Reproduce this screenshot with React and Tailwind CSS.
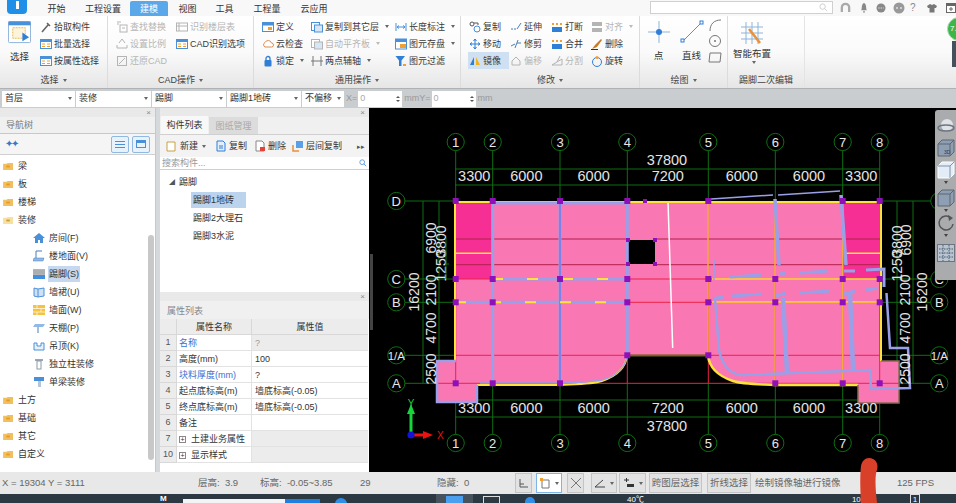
import React from 'react';

const BLUE = '#4a90d9';
const ORANGE = '#f0a030';
const GRAY = '#b4b4b4';

// small ribbon glyphs, all on a 12x12 box
function Glyph({ name, off }) {
  const c = off ? GRAY : BLUE;
  const shapes = {
    dropper: <path d="M2 11 L8 4 M7 2 L10 5" stroke="#666" strokeWidth="1.6" fill="none" />,
    list: <g><rect x="0.5" y="1.5" width="11" height="9" fill="#fff" stroke={c} /><rect x="0.5" y="1.5" width="11" height="2.5" fill={c} /><path d="M2 6 H5 M7 6 H10 M2 8.5 H5 M7 8.5 H10" stroke={ORANGE} /></g>,
    find: <g><rect x="4" y="4" width="7" height="7" fill="none" stroke={c} /><path d="M1 1 H5 M1 3 H3 M6 7 H9" stroke={c} /></g>,
    scale: <path d="M1 10 H11 M1 10 V7 M11 10 V7 M3 5 L6 1 L9 5" stroke={c} fill="none" />,
    restore: <g><rect x="1.5" y="1.5" width="9" height="9" fill="none" stroke={c} /><path d="M3 9 L9 3" stroke={c} /></g>,
    table: <g><rect x="0.5" y="2" width="11" height="8" fill="none" stroke={c} /><path d="M3 2 V10 M0.5 5 H11.5" stroke={c} /></g>,
    define: <g><rect x="0.5" y="1.5" width="11" height="9" fill="#fff" stroke={c} /><rect x="0.5" y="1.5" width="11" height="3" fill={c} /><rect x="6" y="6" width="4" height="3" fill={ORANGE} /></g>,
    cloud: <path d="M3 9 A2.5 2.5 0 0 1 3 4.5 A3.5 3.5 0 0 1 9.5 5 A2 2 0 0 1 9.5 9 Z" fill="#fff" stroke="#e08a50" />,
    lock: <g><rect x="2.5" y="5" width="7" height="6.5" rx="1" fill="#2f7ed8" /><path d="M4 5 V3.5 A2 2 0 0 1 8 3.5 V5" stroke="#2f7ed8" fill="none" strokeWidth="1.3" /></g>,
    copyLayer: <g><rect x="0.5" y="1.5" width="8" height="8" fill="#fff" stroke={c} /><rect x="3.5" y="4" width="8" height="7" fill="#d7e6f7" stroke={c} /></g>,
    axis: <path d="M2 1 V11 M10 1 V11 M0 6 H12" stroke="#777" fill="none" />,
    measure: <path d="M1 2 V10 M11 2 V10 M2 6 H10 M2 6 L4 4.5 M2 6 L4 7.5 M10 6 L8 4.5 M10 6 L8 7.5" stroke={c} fill="none" />,
    save: <g><rect x="0.5" y="1" width="11" height="10" fill="#fff" stroke={c} /><rect x="0.5" y="1" width="11" height="3" fill={c} /><rect x="5" y="6" width="6" height="4" fill={ORANGE} /></g>,
    filter: <g><path d="M0.5 1 H10 L6.5 5.5 V11 H4 V5.5 Z" fill="#2f7ed8" /><rect x="8" y="9" width="3" height="2" fill={ORANGE} /></g>,
    copy: <g><circle cx="3" cy="3" r="2" fill="none" stroke="#555" /><circle cx="8" cy="8" r="3" fill="none" stroke={BLUE} /><path d="M5 2 H9 V4" stroke="#555" fill="none" /></g>,
    move: <path d="M6 1 V11 M1 6 H11 M6 1 L4.5 3 M6 1 L7.5 3 M6 11 L4.5 9 M6 11 L7.5 9 M1 6 L3 4.5 M1 6 L3 7.5 M11 6 L9 4.5 M11 6 L9 7.5" stroke="#2f7ed8" fill="none" />,
    mirror: <g><path d="M5 2 V10 H1 Z" fill="#2f7ed8" /><path d="M7 2 V10 H11 Z" fill="#f2b21c" /></g>,
    extend: <path d="M1 8 H3 M4 8 H6 M7 8 L11 2" stroke="#4a7fb5" fill="none" />,
    trim: <path d="M1 8 L5 6 M7 5 H11 M5 10 L8 2" stroke="#4a7fb5" fill="none" />,
    offset: <path d="M2 10 H10 V6 L6 2 L2 6 Z" fill="none" stroke={c} />,
    split: <g><path d="M1 10 H11 V4 L1 10" fill="none" stroke={c} /><path d="M9 1 L6 7" stroke={c} /></g>,
    breakup: <g><rect x="1" y="6" width="10" height="5" fill="#2f7ed8" /><path d="M2 2 V4 M6 2 V4 M10 2 V4" stroke={ORANGE} strokeWidth="2" /></g>,
    align: <g><rect x="1" y="1" width="10" height="4" fill={c} /><rect x="1" y="7" width="10" height="4" fill={c} /></g>,
    erase: <g><path d="M1 11 L4 7 L10 1 L11 2 L6 9 Z" fill="#c77d2a" /><path d="M0 11.5 H7" stroke="#333" /></g>,
    rotate: <g><circle cx="6" cy="7" r="4.5" fill="none" stroke="#2f7ed8" /><circle cx="6" cy="2.5" r="1.6" fill={ORANGE} /></g>,
  };
  return <svg viewBox="0 0 12 12" className="w-3 h-3 shrink-0">{shapes[name]}</svg>;
}

function Caret({ light }) {
  return <span className={`ml-1 inline-block w-0 h-0 border-x-[2.5px] border-x-transparent border-t-[3px] ${light ? 'border-t-[#bbb]' : 'border-t-[#666]'}`}></span>;
}

function RibbonItem({ icon, label, off, caret, active }) {
  return (
    <div className={`flex items-center gap-[2px] h-[17px] px-[1px] whitespace-nowrap ${off ? 'text-[#b5b5b5]' : 'text-[#3a3a3a]'} ${active ? 'bg-[#cfe0f2]' : ''}`}>
      <Glyph name={icon} off={off} />
      <span className="pt-[2px]">{label}</span>
      {caret && <Caret light={off} />}
    </div>
  );
}

function Column({ width, items }) {
  return (
    <div className="flex flex-col" style={{ width }}>
      {items.map(it => <RibbonItem key={it.label} {...it} />)}
    </div>
  );
}

function Group({ width, title, caret, children, pad = 'pl-[7px]' }) {
  return (
    <div className="flex flex-col h-full border-r border-[#dcdcdc] shrink-0" style={{ width }}>
      <div className={`flex-1 flex pt-[2px] ${pad}`}>{children}</div>
      <div className="h-[17px] flex items-center justify-center text-[#444] pt-[2px]">
        {title}{caret && <Caret />}
      </div>
    </div>
  );
}

function Ribbon() {
  return (
    <div className="h-[72px] flex bg-gradient-to-b from-white via-[#fafafa] to-[#e6e6e6] text-[9px]">
      <Group width={108} title="选择" caret pad="pl-0">
        <div className="w-[39px] flex flex-col items-center pt-[3px] text-[#333]">
          <svg viewBox="0 0 24 24" className="w-[23px] h-[23px]">
            <rect x="0.5" y="0.5" width="23" height="22" rx="1" fill="#fff" stroke="#8fb3d9" />
            <rect x="0.5" y="0.5" width="23" height="4" fill="#4a90d9" />
            <path d="M5 7 H18 V18 H5 Z" fill="#fdf4dc" stroke="#e6b64c" strokeDasharray="2 1" />
            <path d="M15 12 L22 17 L15 21 Z" fill="#2f7ed8" />
          </svg>
          <span className="mt-[6px] text-[9.5px]">选择</span>
        </div>
        <Column width={68} items={[
          { icon: 'dropper', label: '拾取构件' },
          { icon: 'list', label: '批量选择' },
          { icon: 'list', label: '按属性选择' },
        ]} />
      </Group>
      <Group width={146} title="CAD操作" caret>
        <Column width={60} items={[
          { icon: 'find', label: '查找替换', off: true },
          { icon: 'scale', label: '设置比例', off: true },
          { icon: 'restore', label: '还原CAD', off: true },
        ]} />
        <Column width={76} items={[
          { icon: 'table', label: '识别楼层表', off: true },
          { icon: 'list', label: 'CAD识别选项' },
        ]} />
      </Group>
      <Group width={207} title="通用操作" caret>
        <Column width={49} items={[
          { icon: 'define', label: '定义' },
          { icon: 'cloud', label: '云检查' },
          { icon: 'lock', label: '锁定', caret: true },
        ]} />
        <Column width={84} items={[
          { icon: 'copyLayer', label: '复制到其它层', caret: true },
          { icon: 'copyLayer', label: '自动平齐板', off: true, caret: true },
          { icon: 'axis', label: '两点辅轴', caret: true },
        ]} />
        <Column width={66} items={[
          { icon: 'measure', label: '长度标注', caret: true },
          { icon: 'save', label: '图元存盘', caret: true },
          { icon: 'filter', label: '图元过滤' },
        ]} />
      </Group>
      <Group width={179} title="修改" caret>
        <Column width={41} items={[
          { icon: 'copy', label: '复制' },
          { icon: 'move', label: '移动' },
          { icon: 'mirror', label: '镜像', active: true },
        ]} />
        <Column width={41} items={[
          { icon: 'extend', label: '延伸' },
          { icon: 'trim', label: '修剪' },
          { icon: 'offset', label: '偏移', off: true },
        ]} />
        <Column width={40} items={[
          { icon: 'breakup', label: '打断' },
          { icon: 'breakup', label: '合并' },
          { icon: 'split', label: '分割', off: true },
        ]} />
        <Column width={46} items={[
          { icon: 'align', label: '对齐', off: true, caret: true },
          { icon: 'erase', label: '删除' },
          { icon: 'rotate', label: '旋转' },
        ]} />
      </Group>
      <Group width={88} title="绘图" caret pad="pl-[2px]">
        <div className="w-[33px] flex flex-col items-center pt-[2px] text-[#333]">
          <svg viewBox="0 0 24 24" className="w-[24px] h-[24px]">
            <path d="M12 1 V23 M1 12 H23" stroke="#8fb3d9" />
            <circle cx="12" cy="12" r="3" fill="#2f7ed8" />
          </svg>
          <span className="mt-[5px] text-[9.5px]">点</span>
        </div>
        <div className="w-[33px] flex flex-col items-center pt-[2px] text-[#333]">
          <svg viewBox="0 0 24 24" className="w-[24px] h-[24px]">
            <path d="M3 21 L21 3" stroke="#5f8fc4" />
            <rect x="1" y="19" width="3" height="3" fill="#fff" stroke="#2f7ed8" />
            <rect x="20" y="1" width="3" height="3" fill="#fff" stroke="#2f7ed8" />
          </svg>
          <span className="mt-[5px] text-[9.5px]">直线</span>
        </div>
        <div className="flex flex-col items-center gap-[2px]">
          <svg viewBox="0 0 14 14" className="w-[14px] h-[14px]"><path d="M2 13 C2 6 6 2 13 2" stroke="#777" fill="none" /></svg>
          <svg viewBox="0 0 14 14" className="w-[14px] h-[14px]"><circle cx="7" cy="7" r="5.5" stroke="#777" fill="none" /><circle cx="7" cy="7" r="1" fill="#777" /></svg>
          <svg viewBox="0 0 14 14" className="w-[14px] h-[14px]"><path d="M2 3 H13 L12 12 H1 Z" stroke="#777" fill="none" /></svg>
        </div>
      </Group>
      <div className="w-[77px] flex flex-col h-full border-r border-[#e4e4e4]">
        <div className="flex-1 w-[48px] flex flex-col items-center pt-[5px] text-[#333]">
          <svg viewBox="0 0 24 24" className="w-[24px] h-[24px]">
            <path d="M1 6 H23 M1 12 H23 M1 18 H23 M6 1 V23 M12 1 V23 M18 1 V23" stroke="#8fb3d9" />
            <path d="M9 8 L20 22" stroke="#e8913a" strokeWidth="2.5" />
          </svg>
          <span className="mt-[2px] text-[9.5px] whitespace-nowrap">智能布置</span>
          <Caret />
        </div>
        <div className="h-[17px] flex items-center justify-center text-[#444] pt-[2px]">踢脚二次编辑</div>
      </div>
    </div>
  );
}

function TopBar() {
  const tabs = [
    ['开始', 'ml-[20px] w-[19px]'],
    ['工程设置', 'ml-[19px] w-[36px]'],
    ['建模', 'ml-[9px] w-[38px] bg-[#5aa7ea] text-white rounded-t-[2px]'],
    ['视图', 'ml-[10px] w-[19px]'],
    ['工具', 'ml-[18px] w-[19px]'],
    ['工程量', 'ml-[19px] w-[28px]'],
    ['云应用', 'ml-[19px] w-[28px]'],
  ];
  return (
    <div className="h-4 flex items-end bg-[#f8f8f8] text-[9px] text-[#333] relative">
      <div className="w-[20px] h-[14px] ml-[7px] mb-[2px] bg-[#1f8fe8] rounded-b-[4px] shrink-0 flex justify-center">
        <span className="w-[3px] h-[8px] bg-white mt-[1px]"></span>
      </div>
      {tabs.map(([t, cls]) => (
        <div key={t} className={`h-[15px] pt-[2px] flex items-center justify-center whitespace-nowrap shrink-0 ${cls}`}>{t}</div>
      ))}
      <div className="ml-auto flex items-center self-start mt-[1px]">
        <div className="w-[183px] h-[13px] bg-white border border-[#d0d0d0] flex items-center justify-end pr-1">
          <svg viewBox="0 0 10 10" className="w-[9px] h-[9px]"><circle cx="4" cy="4" r="3" fill="none" stroke="#ccc" /><path d="M6 6 L9 9" stroke="#ccc" /></svg>
        </div>
        <svg viewBox="0 0 12 12" className="w-[11px] h-[11px] ml-[7px]"><path d="M2 11 V6 A4 4 0 0 1 10 6 V11" fill="none" stroke="#aaa" strokeWidth="2.5" /></svg>
        <svg viewBox="0 0 8 12" className="w-[8px] h-[11px] ml-[9px]"><path d="M1 9 C2 7 1 2 4 1 C7 2 6 7 7 9 Z M3 10 H5 V11.5 H3 Z" fill="#888" /></svg>
        <svg viewBox="0 0 10 10" className="w-[10px] h-[10px] ml-[8px]"><circle cx="5" cy="5" r="4.5" fill="#888" /><path d="M2.5 5 H7.5" stroke="#fff" strokeDasharray="1 1.2" /></svg>
        <svg viewBox="0 0 12 12" className="w-[12px] h-[12px] ml-[7px]"><circle cx="6" cy="6" r="5.5" fill="#999" /><path d="M3 6 H5 M7 6 H9" stroke="#fff" /></svg>
        <span className="w-[8px] ml-[5px] text-[#888] text-[10px] leading-none">?</span>
        <svg viewBox="0 0 10 10" className="w-[10px] h-[10px] ml-[9px]"><path d="M3 1 L0 3 L1 5 H2.5 V9.5 H7.5 V5 H9 L10 3 L7 1 L5 2 Z" fill="#777" /></svg>
        <svg viewBox="0 0 10 10" className="w-[10px] h-[10px] ml-[9px]"><rect x="0.5" y="0.5" width="9" height="9" fill="#fff" stroke="#666" /><rect x="0.5" y="0.5" width="9" height="2.5" fill="#666" /><path d="M5 4 V8 M3 6 H7" stroke="#666" /></svg>
      </div>
    </div>
  );
}

function SelectBox({ width, label }) {
  return (
    <div className="h-[16px] bg-white flex items-center justify-between px-[3px] shrink-0 text-[#333]" style={{ width }}>
      <span className="whitespace-nowrap overflow-hidden pt-[1px]">{label}</span>
      <span className="w-0 h-0 border-x-[2px] border-x-transparent border-t-[3px] border-t-[#666] shrink-0"></span>
    </div>
  );
}

function Spin() {
  return (
    <div className="w-[44px] h-[16px] bg-white flex items-center justify-between px-[2px] text-[#aaa] shrink-0">
      <span>0</span>
      <span className="flex flex-col gap-[2px]">
        <span className="w-0 h-0 border-x-[2px] border-x-transparent border-b-[2px] border-b-[#555]"></span>
        <span className="w-0 h-0 border-x-[2px] border-x-transparent border-t-[2px] border-t-[#555]"></span>
      </span>
    </div>
  );
}

function OptionBar() {
  return (
    <div className="h-5 bg-[#c9cdd0] flex items-center pl-[2px] gap-[1px] text-[9px] border-t border-[#aeb2b5]">
      <SelectBox width={73} label="首层" />
      <SelectBox width={75} label="装修" />
      <SelectBox width={74} label="踢脚" />
      <SelectBox width={74} label="踢脚1地砖" />
      <SelectBox width={42} label="不偏移" />
      <span className="text-[#999] ml-[1px] whitespace-nowrap">X=</span>
      <Spin />
      <span className="text-[#999] whitespace-nowrap ml-[1px]">mmY=</span>
      <Spin />
      <span className="text-[#999] ml-[1px]">mm</span>
    </div>
  );
}

function Folder({ open }) {
  return (
    <svg viewBox="0 0 12 10" className="w-[11px] h-[9px] shrink-0">
      <path d="M0 2 H4 L5 1 H11 V9 H0 Z" fill={open ? '#f7e0a0' : '#f0c060'} />
      <rect x="3.5" y="4" width="4" height="2" fill={open ? '#c9a040' : '#e89a20'} />
    </svg>
  );
}

function TreeIcon({ name }) {
  const shapes = {
    room: <path d="M6 1 L12 6 H10 V11 H7 V8 H5 V11 H2 V6 H0 Z" fill="#4a90d9" />,
    floor: <g><path d="M3 1 V8 M3 1 H9" stroke="#4a7fb5" fill="none" /><path d="M1 8 H11 L10 11 H0 Z" fill="#8fb9e8" stroke="#4a7fb5" strokeWidth="0.5" /></g>,
    skirt: <g><rect x="0" y="1" width="12" height="6" fill="#b5b5b5" /><path d="M0 3 H12 M0 5 H12" stroke="#8a9aaa" strokeWidth="0.5" /><rect x="0" y="7" width="12" height="4" fill="#3f8ee0" /></g>,
    dado: <path d="M1 2 L5 3 L11 2 V10 L5 11 L1 10 Z M5 3 V11" fill="#cfe0f5" stroke="#4a90d9" />,
    wall: <g><rect x="0" y="1" width="12" height="10" fill="#f5c242" /><path d="M0 4.5 H12 M0 8 H12 M4 1 V4.5 M8 4.5 V8 M4 8 V11" stroke="#fff" strokeWidth="0.7" /></g>,
    ceiling: <g><path d="M2 2 H12 L10 5 H0 Z" fill="#8fb9e8" /><path d="M5 5 V11" stroke="#4a7fb5" /></g>,
    hang: <path d="M1 3 H4 V6 H8 V3 H11 V10 H1 Z" fill="#e8f0fa" stroke="#4a90d9" />,
    column: <g><rect x="2" y="1" width="8" height="2" fill="#9aa7b5" /><rect x="4" y="3" width="4" height="8" fill="#fff" stroke="#8a9aaa" /></g>,
    beam: <g><rect x="1" y="1" width="10" height="4" fill="#4a90d9" /><rect x="5" y="5" width="3" height="6" fill="#b5c6d9" /></g>,
  };
  return <svg viewBox="0 0 12 12" className="w-3 h-3 shrink-0">{shapes[name]}</svg>;
}

function NavTree() {
  const rows = [
    { t: '梁' }, { t: '板' }, { t: '楼梯' }, { t: '装修', open: true },
    { t: '房间(F)', i: 'room' }, { t: '楼地面(V)', i: 'floor' }, { t: '踢脚(S)', i: 'skirt', on: true },
    { t: '墙裙(U)', i: 'dado' }, { t: '墙面(W)', i: 'wall' }, { t: '天棚(P)', i: 'ceiling' },
    { t: '吊顶(K)', i: 'hang' }, { t: '独立柱装修', i: 'column' }, { t: '单梁装修', i: 'beam' },
    { t: '土方' }, { t: '基础' }, { t: '其它' }, { t: '自定义' },
  ];
  return (
    <div className="w-[156px] shrink-0 bg-white flex flex-col border-r border-[#c8c8c8] relative text-[9px] text-[#333]">
      <div className="h-[9px] bg-[#e9e9e9] flex justify-end items-center pr-[4px] text-[8px] leading-none text-[#888]">×</div>
      <div className="h-[17px] bg-[#f0f0f0] border-b border-[#c8c8c8] flex items-center pl-[6px] pt-[2px] text-[#777]">导航树</div>
      <div className="h-[21px] bg-[#f5f5f5] border-b border-[#d0d0d0] flex items-center justify-between px-[5px]">
        <span className="text-[#3b78c2] text-[10px] leading-none tracking-[-2px]">✦✦</span>
        <span className="flex gap-[3px]">
          <span className="w-[18px] h-[17px] border border-[#8fb9e0] bg-[#e8f2fb] rounded-[2px] flex flex-col justify-center gap-[2px] px-[3px]">
            <i className="block h-px bg-[#4a90d9]"></i><i className="block h-px bg-[#4a90d9]"></i><i className="block h-px bg-[#4a90d9]"></i>
          </span>
          <span className="w-[18px] h-[17px] border border-[#8fb9e0] bg-[#e8f2fb] rounded-[2px] p-[3px]">
            <i className="block h-[3px] bg-[#4a90d9]"></i>
            <i className="block h-[5px] border border-t-0 border-[#4a90d9]"></i>
          </span>
        </span>
      </div>
      <div className="pt-[2px] flex flex-col">
        {rows.map(r => r.i ? (
          <div key={r.t} className="h-[18px] flex items-center pl-[33px]">
            <TreeIcon name={r.i} />
            <span className={`ml-[3px] whitespace-nowrap leading-[15px] pt-[1px] px-[1px] ${r.on ? 'bg-[#c5d8f0]' : ''}`}>{r.t}</span>
          </div>
        ) : (
          <div key={r.t} className="h-[18px] flex items-center pl-[3px] gap-[4px]">
            <Folder open={r.open} />
            <span className="pt-[2px]">{r.t}</span>
          </div>
        ))}
      </div>
      <div className="absolute left-[148px] top-[127px] w-[6px] h-[225px] bg-[#c8c8c8] rounded-full"></div>
    </div>
  );
}

function ComponentList() {
  return (
    <div className="h-[184px] bg-white flex flex-col text-[9px] text-[#333]">
      <div className="h-[9px] bg-[#e9e9e9] flex justify-end items-center pr-[4px] text-[8px] leading-none text-[#888]">×</div>
      <div className="h-[18px] bg-[#f0f0f0] flex items-end pl-[1px] border-b border-[#d0d0d0]">
        <div className="w-[47px] h-[18px] pt-[2px] bg-[#f8f8f8] flex items-center justify-center">构件列表</div>
        <div className="w-[49px] h-[17px] pt-[2px] ml-[1px] bg-[#dcdcdc] flex items-center justify-center text-[#aaa]">图纸管理</div>
      </div>
      <div className="h-[22px] bg-[#f3f3f3] flex items-center pl-[5px] pr-[4px] whitespace-nowrap">
        <svg viewBox="0 0 12 12" className="w-3 h-3 shrink-0"><path d="M2 2 H10 V11 H2 Z" fill="#fff" stroke="#c9a040" /></svg>
        <span className="ml-[3px] pt-[2px]">新建</span><Caret />
        <svg viewBox="0 0 12 12" className="w-3 h-3 shrink-0 ml-[9px]"><path d="M2 1 H8 L10 3 V11 H2 Z" fill="#e4eefa" stroke="#2f7ed8" /><path d="M4 6 H8 M4 8 H8" stroke="#2f7ed8" /></svg>
        <span className="ml-[2px] pt-[2px]">复制</span>
        <svg viewBox="0 0 12 12" className="w-3 h-3 shrink-0 ml-[7px]"><path d="M2 1 H8 L10 3 V11 H2 Z" fill="#fff" stroke="#888" /><rect x="6" y="7" width="5" height="4" fill="#e0443a" /></svg>
        <span className="ml-[2px] pt-[2px]">删除</span>
        <svg viewBox="0 0 12 12" className="w-3 h-3 shrink-0 ml-[6px]"><rect x="4" y="1" width="7" height="7" fill="#5aa0e8" /><path d="M1 5 V11 H7" stroke="#e8913a" fill="none" strokeWidth="1.5" /></svg>
        <span className="ml-[2px] pt-[2px]">层间复制</span>
        <span className="ml-auto text-[#555] text-[7px] leading-none">▸▸</span>
      </div>
      <div className="h-[13px] flex items-center justify-between px-[2px] border-b border-[#cfcfcf] text-[#999]">
        <span className="pt-[2px]">搜索构件...</span>
        <svg viewBox="0 0 10 10" className="w-[8px] h-[8px]"><circle cx="4" cy="4" r="3" fill="none" stroke="#4a90d9" /><path d="M6 6 L9 9" stroke="#4a90d9" /></svg>
      </div>
      <div className="pt-[3px] flex flex-col">
        <div className="h-[18px] flex items-center pl-[9px] gap-[4px]">
          <span className="text-[6px] leading-none text-[#555]">◢</span><span className="pt-[2px]">踢脚</span>
        </div>
        <div className="h-[18px] flex items-center pl-[31px]"><span className="bg-[#bcd3ee] w-[55px] h-[16px] pt-[2px] flex items-center px-[2px]">踢脚1地砖</span></div>
        <div className="h-[18px] pt-[2px] flex items-center pl-[33px]">踢脚2大理石</div>
        <div className="h-[18px] pt-[2px] flex items-center pl-[33px]">踢脚3水泥</div>
      </div>
    </div>
  );
}

function PropertyList() {
  const rows = [
    { n: 1, k: '名称', v: '?', blue: true, grayV: true },
    { n: 2, k: '高度(mm)', v: '100' },
    { n: 3, k: '块料厚度(mm)', v: '?', blue: true },
    { n: 4, k: '起点底标高(m)', v: '墙底标高(-0.05)' },
    { n: 5, k: '终点底标高(m)', v: '墙底标高(-0.05)' },
    { n: 6, k: '备注', v: '' },
    { n: 7, k: '土建业务属性', plus: true, grayV: true },
    { n: 10, k: '显示样式', plus: true, grayV: true },
  ];
  return (
    <div className="flex-1 bg-white flex flex-col text-[9px] text-[#333]">
      <div className="h-[9px] bg-[#e9e9e9] flex justify-end items-center pr-[4px] text-[8px] leading-none text-[#888]">×</div>
      <div className="h-[18px] bg-[#f0f0f0] flex items-center pl-[7px] pt-[3px] text-[#888]">属性列表</div>
      <div className="grid grid-cols-[17px_75px_116px] auto-rows-[16px] items-stretch">
        <div className="bg-[#ececec] border-r border-b border-[#d8d8d8]"></div>
        <div className="bg-[#ececec] border-r border-b border-[#d8d8d8] pt-[2px] flex items-center justify-center">属性名称</div>
        <div className="bg-[#ececec] border-b border-[#d8d8d8] pt-[2px] flex items-center justify-center">属性值</div>
        {rows.map(r => (
          <React.Fragment key={r.n}>
            <div className="bg-[#ececec] border-r border-b border-[#d8d8d8] flex items-center justify-center text-[#555]">{r.n}</div>
            <div className={`border-r border-b border-[#e2e2e2] flex items-center px-[2px] pt-[2px] whitespace-nowrap ${r.blue ? 'text-[#3a6fd0]' : ''}`}>
              {r.plus && <span className="w-[7px] h-[7px] border border-[#888] mr-[5px] text-[7px] leading-[5px] text-center shrink-0">+</span>}
              {r.k}
            </div>
            <div className={`border-b border-[#e2e2e2] flex items-center px-[3px] pt-[2px] whitespace-nowrap ${r.grayV ? 'bg-[#ececec] text-[#999]' : ''}`}>{r.v}</div>
          </React.Fragment>
        ))}
      </div>
    </div>
  );
}

// axis positions of the drawing, in page coordinates
const AX = [455.7, 492.7, 560, 627.3, 708.3, 775.3, 842.7, 879.7];
const AY = { D: 201, C: 279, B: 302.3, 'A1': 355.3, A: 383.3 };
const SPANS = ['3300', '6000', '6000', '7200', '6000', '6000', '3300'];
const GREEN = '#0e6e12';
const LILAC = '#9aa0e8';
const PURPLE = '#8f10b8';
const FONT = 'Liberation Sans';

function Bubble({ x, y, t }) {
  return (
    <g>
      <circle cx={x} cy={y} r="8.6" fill="#000" stroke={GREEN} />
      <text x={x} y={y + 4.5} textAnchor="middle" fontSize={String(t).length > 1 ? 11.5 : 13} fontFamily={FONT} fill="#e8e8e8">{t}</text>
    </g>
  );
}

function VText({ x, y, t }) {
  return (
    <text transform={`translate(${x} ${y}) rotate(-90)`} y="5" textAnchor="middle" fontSize="14" fontFamily={FONT} fill="#e4e4e4">{t}</text>
  );
}

function Drawing() {
  const rowsY = Object.values(AY);
  const squares = [
    ...[0, 1, 2, 3, 4, 6, 7].map(i => [AX[i], AY.D]),
    ...AX.map(x => [x, AY.C]),
    ...[0, 1, 3, 4, 5, 6, 7].map(i => [AX[i], AY.B]),
    [AX[3], AY.A1], [AX[4], AY.A1],
    ...[0, 1, 2, 5, 6, 7].map(i => [AX[i], AY.A]),
  ];
  const outline = 'M455 201 H881 V361 H899 V403 H858 V385 H775 C755 384 742 384 733 381 C718 376 709 367 708 355 H627 C626 367 617 376 602 381 C593 384 580 384 560 385 H477 V402 H437 V361 H455 Z';
  return (
    <svg viewBox="369 108 587 364" className="w-full h-full block">
      <rect x="369" y="108" width="587" height="364" fill="#000" />

      {/* axes */}
      {AX.map(x => <path key={x} d={`M${x} 150 V201 M${x} 383 V435`} stroke={GREEN} />)}
      {rowsY.map(y => <path key={y} d={`M405 ${y} H455 M881 ${y} H931`} stroke={GREEN} />)}
      <path d="M455 169 H880 M455 185 H880 M455 400 H880 M455 417 H880 M423 201 V383 M439 201 V383 M897 201 V383 M913 201 V383" stroke={GREEN} />

      {/* slab */}
      <path d={outline} fill="#f977b3" />
      <path d="M456 202 H492 V279 H456 Z M843 202 H880 V279 H843 Z" fill="#f52f93" />
      <rect x="628" y="240" width="27" height="24" fill="#000" />
      <path d="M455 239 H628 M655 239 H880 M455 264.7 H628 M655 264.7 H880" stroke="#b0204a" />
      <path d="M455 279 H880 M455 302.3 H880 M455 355.3 H880 M437 383.3 H899" stroke="#ee2244" />
      {AX.map(x => <path key={x} d={`M${x} 279 V383`} stroke="#ee2244" />)}
      <path d="M627 355.5 H708" stroke="#6b6b20" strokeWidth="2" />
      <path d="M668 202 L672.7 348" stroke="#fff" strokeWidth="1.5" />

      {/* yellow edges */}
      <path d="M455 202 H881 M455 202 V361 M881 202 V361" stroke="#ffe23c" strokeWidth="2" fill="none" />
      <path d="M477 385 H560 C580 384 593 384 602 381 C617 376 626 367 627 355" stroke="#ffe23c" strokeWidth="2" fill="none" />
      <path d="M858 385 H775 C755 384 742 384 733 381 C718 376 709 367 708 355" stroke="#ffe23c" strokeWidth="2.5" fill="none" />
      <path d="M455 253.3 H492 M845 253.3 H880 M712 279 H880 M712 302 H880" stroke="#ffe23c" strokeWidth="1.5" />
      <path d="M708 202 V355 M775 202 V385 M842.7 202 V385" stroke="#f5a83a" strokeWidth="1.5" />

      {/* left wall runs */}
      <path d="M492.7 203 V385 M560 203 V385 M627.3 203 V355 M492 203 H627 M492 279 H627 M455 302.3 H627" stroke={LILAC} strokeWidth="3" fill="none" />
      <path d="M560 203 V385" stroke="#5a66e8" />
      <path d="M492 279 H627 M455 302.3 H627" stroke="#ffe23c" strokeWidth="2" strokeDasharray="11 24" />
      <path d="M627 355 C626 367 617 376 602 380 C593 382 580 382 560 383 H480" stroke={LILAC} strokeWidth="1.5" fill="none" />
      <path d="M456 361 H437 V402 H477 V385" stroke={LILAC} strokeWidth="2.5" fill="none" />
      <path d="M881 361 H899 V403 H858 V385" stroke="#8a6b55" strokeWidth="1.5" fill="none" />

      {/* right wall runs */}
      <path d="M711 199 L773 195 M778 195 L840 191" stroke={LILAC} strokeWidth="1.5" />
      <path d="M775 199 L779 265 M841 195 L846 265" stroke={LILAC} strokeWidth="3.5" />
      <path d="M714 260 V280" stroke={LILAC} strokeWidth="1.5" />
      <path d="M730 277 L762 275 M780 274 L786 273 M800 273 L828 271 M844 271 L855 271 M866 270 L884 269 V287 M716 298 L724 297 M732 296 L762 294 M776 296 L786 293 M800 293 L830 291 M844 294 L855 291 M866 290 L878 288" stroke={LILAC} strokeWidth="3" fill="none" />
      <path d="M715 298 L719 350 C722 366 732 376 745 375 L870 370 L871 389 L910 388 L908 348 L890 348 L886.5 293" stroke={LILAC} strokeWidth="2.5" fill="none" />
      <path d="M783 297 L787 373 M850 292 L853 370" stroke={LILAC} strokeWidth="4.5" fill="none" />

      {/* grid nodes */}
      {squares.map(([x, y]) => <rect key={`${x}-${y}`} x={x - 3} y={y - 3} width="6" height="6" fill={PURPLE} />)}
      {[[628, 240], [655, 240], [628, 264], [655, 264], [645, 201]].map(([x, y]) => <rect key={`${x}-${y}`} x={x - 2} y={y - 2} width="4" height="4" fill={PURPLE} />)}

      {/* bubbles */}
      {AX.map((x, i) => <Bubble key={i} x={x} y={142} t={i + 1} />)}
      {AX.map((x, i) => <Bubble key={i} x={x} y={443} t={i + 1} />)}
      <text x="667" y="165" textAnchor="middle" fontSize="14.5" fontFamily={FONT} fill="#e4e4e4">37800</text>
      <text x="667" y="431" textAnchor="middle" fontSize="14.5" fontFamily={FONT} fill="#e4e4e4">37800</text>
      {SPANS.map((t, i) => (
        <g key={i} fontSize="14.5" fontFamily={FONT} fill="#e4e4e4" textAnchor="middle">
          <text x={(AX[i] + AX[i + 1]) / 2} y="181">{t}</text>
          <text x={(AX[i] + AX[i + 1]) / 2} y="413">{t}</text>
        </g>
      ))}
      {[['D', AY.D], ['C', AY.C], ['B', AY.B], ['1/A', AY.A1], ['A', AY.A]].map(([t, y]) => (
        <g key={t}>
          <Bubble x={396.3} y={y} t={t} />
          <Bubble x={939.3} y={y} t={t} />
        </g>
      ))}
      <VText x="414" y="292" t="16200" />
      <VText x="431" y="238" t="6900" />
      <VText x="431" y="290" t="2100" />
      <VText x="431" y="328" t="4700" />
      <VText x="431" y="369" t="2500" />
      <VText x="441" y="241" t="3800" />
      <VText x="441" y="266" t="1250" />
      <path d="M446 238 V279 M449 264 H446" stroke={GREEN} />
      <VText x="922" y="292" t="16200" />
      <VText x="906" y="240" t="6900" />
      <VText x="905" y="290" t="2100" />
      <VText x="905" y="328" t="4700" />
      <VText x="905" y="369" t="2500" />
      <VText x="897" y="241" t="3800" />
      <VText x="897" y="266" t="1250" />

      {/* ucs marker */}
      <path d="M411 433 V412" stroke="#16d43a" strokeWidth="3" />
      <path d="M411 404 L415 414 H407 Z" fill="#16d43a" />
      <text x="411" y="407" textAnchor="middle" fontSize="10" fontFamily={FONT} fill="#16d43a">Y</text>
      <path d="M413 435 H426" stroke="#ee1111" strokeWidth="3" />
      <path d="M433 435 L423 431 V439 Z" fill="#ee1111" />
      <text x="437" y="439" fontSize="10" fontFamily={FONT} fill="#ee1111">X</text>
      <circle cx="411" cy="435" r="3.6" fill="#1414d8" />
    </svg>
  );
}

function ViewTools() {
  return (
    <div className="absolute right-0 top-[2px] w-[21px] h-[170px] bg-[#a9abad] rounded-l-[3px] flex flex-col items-center pt-[8px]">
      <svg viewBox="0 0 18 16" className="w-[18px] h-[16px]">
        <ellipse cx="10" cy="7" rx="6" ry="6" fill="#dfe3e8" />
        <ellipse cx="9" cy="10" rx="8" ry="3" fill="none" stroke="#6c7580" strokeWidth="1.4" />
      </svg>
      <svg viewBox="0 0 18 18" className="w-[18px] h-[18px] mt-[5px]">
        <path d="M1 5 L5 1 H17 V13 L13 17 H1 Z" fill="#8e9fb3" stroke="#5a6672" />
        <path d="M1 5 H13 V17 M13 5 L17 1" stroke="#5a6672" fill="none" />
        <text x="7" y="15" fontSize="5" fill="#333" fontFamily={FONT}>3D</text>
      </svg>
      <svg viewBox="0 0 18 18" className="w-[18px] h-[18px] mt-[4px]">
        <path d="M1 5 L5 1 H17 V13 L13 17 H1 Z" fill="#e2edf8" stroke="#fff" />
        <path d="M1 5 H13 V17 M13 5 L17 1" stroke="#7f93a8" fill="none" />
      </svg>
      <span className="mt-[2px] w-0 h-0 border-x-[2px] border-x-transparent border-t-[3px] border-t-[#444]"></span>
      <svg viewBox="0 0 18 18" className="w-[18px] h-[18px] mt-[5px]">
        <path d="M1 5 L5 1 H17 V13 L13 17 H1 Z" fill="#8e9fb3" stroke="#5a6672" />
        <path d="M1 5 H13 V17 M13 5 L17 1" stroke="#5a6672" fill="none" />
      </svg>
      <span className="mt-[2px] w-0 h-0 border-x-[2px] border-x-transparent border-t-[3px] border-t-[#444]"></span>
      <svg viewBox="0 0 18 18" className="w-[18px] h-[18px] mt-[2px]">
        <path d="M14 4 A7 7 0 1 0 16 10" fill="none" stroke="#555" strokeWidth="1.5" />
        <path d="M11 1 L16 4 L12 7 Z" fill="#555" />
      </svg>
      <span className="mt-[2px] w-0 h-0 border-x-[2px] border-x-transparent border-t-[3px] border-t-[#444]"></span>
      <svg viewBox="0 0 18 18" className="w-[18px] h-[18px] mt-[7px]">
        <rect x="0.5" y="0.5" width="17" height="17" fill="#b9c5d2" stroke="#6c7580" />
        <path d="M6 1 V17 M12 1 V17 M2 5 H16 M2 9 H16 M2 13 H16" stroke="#4a5a6a" strokeDasharray="1.5 1" />
      </svg>
    </div>
  );
}

function StatusBtn({ width, active, children }) {
  return (
    <div className={`h-[20px] flex items-center justify-center shrink-0 whitespace-nowrap border ${active ? 'border-[#7fb4e6] bg-white' : 'border-[#c4c4c4] bg-[#e2e2e2]'}`} style={{ width }}>
      {children}
    </div>
  );
}

function StatusBar() {
  return (
    <div className="h-[22px] bg-[#e8e8e8] flex items-center text-[9.5px] text-[#666] whitespace-nowrap">
      <span className="pl-[2px] w-[198px] shrink-0">X = 19304 Y = 3111</span>
      <span className="w-[62px] shrink-0">层高:&nbsp; 3.9</span>
      <span className="w-[100px] shrink-0">标高:&nbsp; -0.05~3.85</span>
      <span className="w-[77px] shrink-0">29</span>
      <span className="w-[78px] shrink-0">隐藏:&nbsp; 0</span>
      <StatusBtn width={17}>
        <svg viewBox="0 0 12 12" className="w-3 h-3"><path d="M2 2 V10 H10 M2 7 H6" stroke="#555" fill="none" /></svg>
      </StatusBtn>
      <div className="ml-[4px]">
        <StatusBtn width={26} active>
          <svg viewBox="0 0 12 12" className="w-3 h-3"><path d="M3 3 H10 V11 H3 Z" stroke="#777" fill="none" /><rect x="1" y="1" width="3" height="3" fill="#f0a030" /></svg>
          <Caret />
        </StatusBtn>
      </div>
      <div className="ml-[5px]">
        <StatusBtn width={17}>
          <svg viewBox="0 0 12 12" className="w-3 h-3"><path d="M1 1 L11 11 M11 1 L1 11" stroke="#777" /></svg>
        </StatusBtn>
      </div>
      <div className="ml-[7px]">
        <StatusBtn width={26}>
          <svg viewBox="0 0 12 12" className="w-3 h-3"><path d="M1 10 H11 M1 10 L9 3" stroke="#444" /></svg>
          <Caret />
        </StatusBtn>
      </div>
      <div className="ml-[2px]">
        <StatusBtn width={27}>
          <svg viewBox="0 0 12 12" className="w-3 h-3"><path d="M1 3 H6 M3.5 1 V5" stroke="#333" /><rect x="4" y="7" width="7" height="3" fill="#333" /></svg>
          <Caret />
        </StatusBtn>
      </div>
      <div className="ml-[3px]"><StatusBtn width={53}>跨图层选择</StatusBtn></div>
      <div className="ml-[5px]"><StatusBtn width={44}>折线选择</StatusBtn></div>
      <span className="ml-[4px] w-[142px] shrink-0">绘制镜像轴进行镜像</span>
      <span>125 FPS</span>
    </div>
  );
}

function TaskBar() {
  return (
    <div className="h-[9px] bg-[#2c3842] flex overflow-hidden text-[8px] text-white relative">
      <span className="ml-[160px] leading-[9px] font-bold w-[23px]">M</span>
      <div className="w-[102px] h-[4px] bg-[#f4f4f4] mt-[5px]"></div>
      <div className="w-[35px] h-[4px] bg-[#1f7fe0] mt-[5px]"></div>
      <div className="w-[12px] h-[12px] rounded-full bg-[#2f8fe8] mt-[4px] ml-[15px]"></div>
      <div className="w-[37px] h-full bg-[#46525c] ml-[89px] flex justify-center pt-[2px]"><span className="w-[17px] h-full bg-[#4aa0ee]"></span></div>
      <div className="w-[17px] h-[12px] border border-[#ddd] mt-[2px] ml-[10px]"></div>
      <div className="w-[10px] h-[10px] rounded-full bg-[#2f8fe8] mt-[3px] ml-[25px]"></div>
      <span className="ml-[92px] leading-[12px]">40℃</span>
      <span className="ml-[208px] leading-[12px]">10</span>
      <span className="ml-[49px] border border-[#ddd] px-[2px] h-[12px] leading-[10px]">1</span>
    </div>
  );
}

export default function App() {
  return (
    <div className="w-[956px] h-[503px] overflow-hidden relative flex flex-col bg-[#d6d9db] font-['Liberation_Sans','Noto_Sans_CJK_SC',sans-serif]">
      <TopBar />
      <Ribbon />
      <OptionBar />
      <div className="flex h-[364px]">
        <NavTree />
        <div className="w-[4px] bg-[#d6d9db] shrink-0"></div>
        <div className="w-[209px] shrink-0 flex flex-col">
          <ComponentList />
          <PropertyList />
        </div>
        <div className="flex-1 relative">
          <Drawing />
          <div className="absolute left-[1px] top-[146px] w-[3px] h-[76px] bg-[#444]"></div>
          <ViewTools />
        </div>
      </div>
      <StatusBar />
      <TaskBar />

      {/* update badge sticking in from the right edge */}
      <div className="absolute left-[947px] top-[17px] w-[24px] h-[24px] rounded-full bg-[#3cb54a] border border-[#a8e0ae] text-white text-[8px] pl-[2px] leading-[22px]">7.</div>
      <div className="absolute left-[952px] top-[41px] w-[6px] h-[26px] bg-[#44525e]"></div>

      {/* pen mark over the screenshot */}
      <svg viewBox="0 0 24 48" className="absolute left-[858px] top-[456px] w-[24px] h-[48px]">
        <path d="M11 2 C17 2 21 7 19 14 C17 18 17 30 19 47 H3 C2 30 2 18 3 10 C4 5 7 2 11 2 Z" fill="#d9402a" />
      </svg>
    </div>
  );
}
